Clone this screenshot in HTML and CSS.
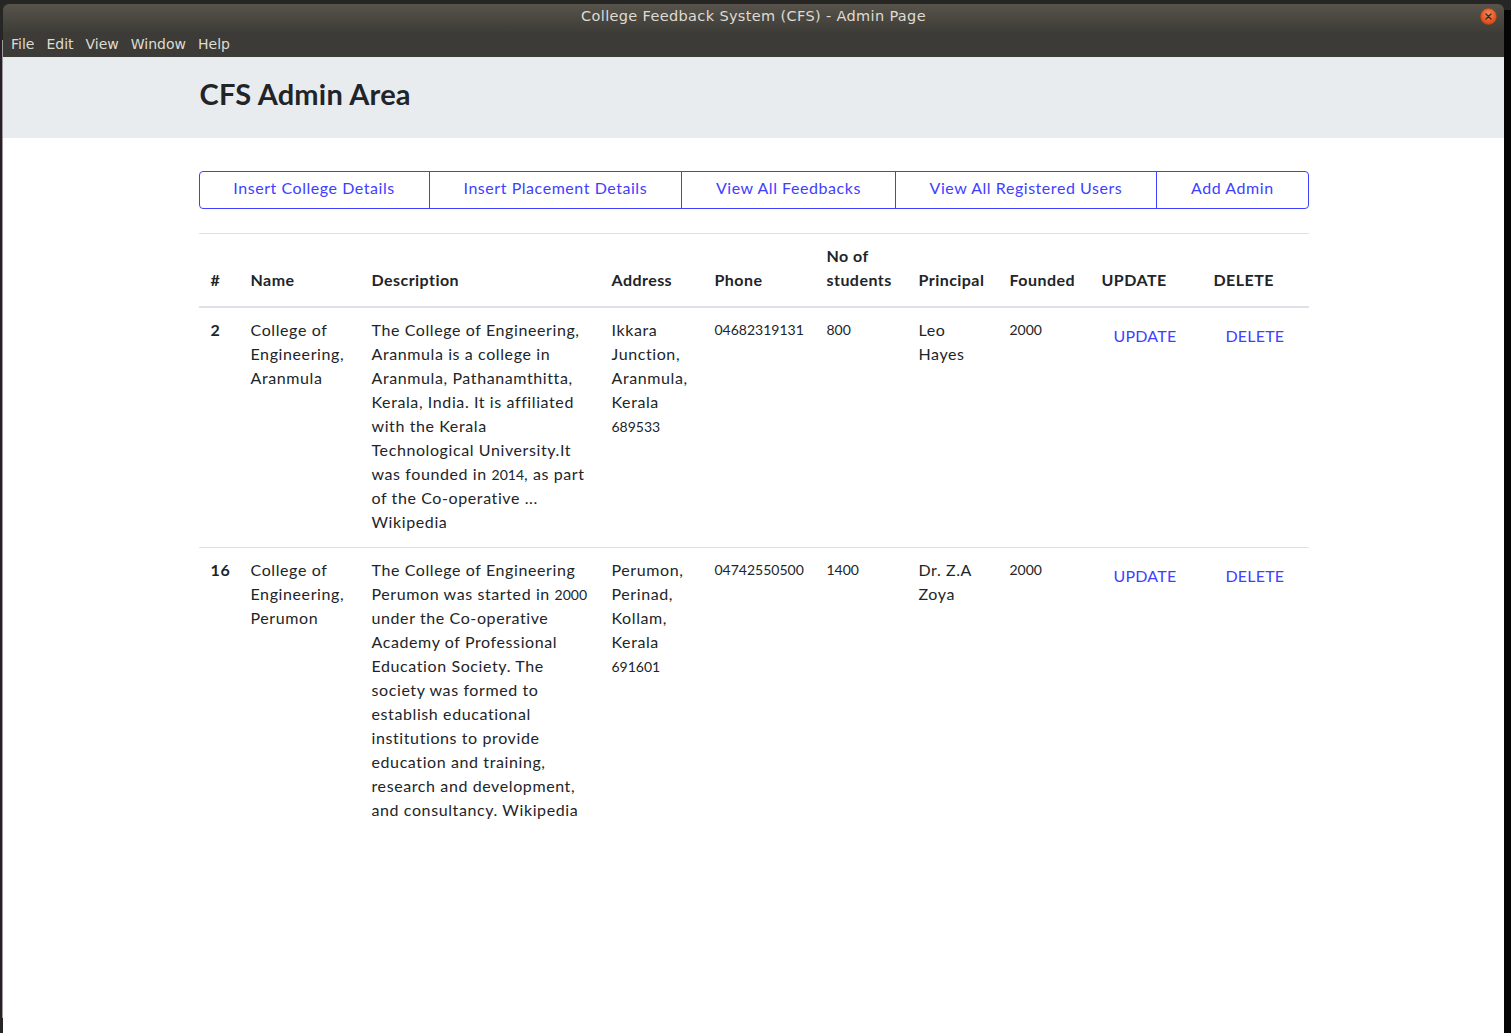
FILE: index.html
```html
<!DOCTYPE html>
<html lang="en">
<head>
<meta charset="utf-8">
<title>College Feedback System (CFS) - Admin Page</title>
<link rel="stylesheet" href="styles.css">
</head>
<body>
<div class="desktop">
  <div class="edge-left"></div>
  <div class="window">
    <div class="titlebar">
      <span class="title">College Feedback System (CFS) - Admin Page</span>
      <span class="close">
        <svg width="17" height="17" viewBox="0 0 17 17"><defs><radialGradient id="cg" cx="50%" cy="35%" r="60%"><stop offset="0" stop-color="#f58a5c"/><stop offset="1" stop-color="#dd4814"/></radialGradient></defs><circle cx="8.5" cy="8.5" r="8" fill="url(#cg)" stroke="#b8400f" stroke-width="0.6"/><path d="M6 6 L11 11 M11 6 L6 11" stroke="#3a2a22" stroke-width="1.4" stroke-linecap="round"/></svg>
      </span>
    </div>
    <div class="menubar">
      <span class="menu-item">File</span>
      <span class="menu-item">Edit</span>
      <span class="menu-item">View</span>
      <span class="menu-item">Window</span>
      <span class="menu-item">Help</span>
    </div>
    <div class="content">
      <header class="jumbotron">
        <div class="container">
          <h1 class="page-title">CFS Admin Area</h1>
        </div>
      </header>
      <main class="container">
        <nav class="btn-group">
          <a class="btn-outline">Insert College Details</a>
          <a class="btn-outline">Insert Placement Details</a>
          <a class="btn-outline">View All Feedbacks</a>
          <a class="btn-outline">View All Registered Users</a>
          <a class="btn-outline">Add Admin</a>
        </nav>
        <table class="table">
          <colgroup>
            <col class="c-id"><col class="c-name"><col class="c-desc"><col class="c-addr"><col class="c-phone"><col class="c-stud"><col class="c-prin"><col class="c-found"><col class="c-upd"><col class="c-del">
          </colgroup>
          <thead>
            <tr>
              <th>#</th>
              <th>Name</th>
              <th>Description</th>
              <th>Address</th>
              <th>Phone</th>
              <th>No of students</th>
              <th>Principal</th>
              <th>Founded</th>
              <th>UPDATE</th>
              <th>DELETE</th>
            </tr>
          </thead>
          <tbody>
            <tr>
              <th class="row-id">2</th>
              <td>College of Engineering, Aranmula</td>
              <td>The College of Engineering, Aranmula is a college in Aranmula, Pathanamthitta, Kerala, India. It is affiliated with the Kerala Technological University.It was founded in <span class="num-inline">2014</span>, as part of the Co-operative ... Wikipedia</td>
              <td>Ikkara Junction, Aranmula, Kerala <span class="num-inline">689533</span></td>
              <td class="num">04682319131</td>
              <td class="num">800</td>
              <td>Leo Hayes</td>
              <td class="num">2000</td>
              <td><a class="btn-link">UPDATE</a></td>
              <td><a class="btn-link">DELETE</a></td>
            </tr>
            <tr>
              <th class="row-id">16</th>
              <td>College of Engineering, Perumon</td>
              <td>The College of Engineering Perumon was started in <span class="num-inline">2000</span> under the Co-operative Academy of Professional Education Society. The society was formed to establish educational institutions to provide education and training, research and development, and consultancy. Wikipedia</td>
              <td>Perumon, Perinad, Kollam, Kerala <span class="num-inline">691601</span></td>
              <td class="num">04742550500</td>
              <td class="num">1400</td>
              <td>Dr. Z.A Zoya</td>
              <td class="num">2000</td>
              <td><a class="btn-link">UPDATE</a></td>
              <td><a class="btn-link">DELETE</a></td>
            </tr>
          </tbody>
        </table>
      </main>
    </div>
  </div>
  <div class="edge-right"></div>
</div>
</body>
</html>
```

FILE: styles.css
```css
* { box-sizing: border-box; }

html, body {
  margin: 0;
  padding: 0;
  height: 100%;
}

body {
  background: #262624;
  font-family: Lato, "Open Sans", sans-serif;
  color: #212529;
}

.desktop {
  display: flex;
  height: 1033px;
  overflow: hidden;
}

.edge-left {
  width: 3px;
  flex: none;
  background: #2a1f28;
  border-right: 1px solid #9b9b9b;
  margin-top: 40px;
  margin-bottom: 15px;
}

.edge-right {
  flex: 1;
  background: #050505;
  margin-top: 10px;
}

.window {
  width: 1501px;
  flex: none;
  display: flex;
  flex-direction: column;
  margin-top: 4px;
}

.titlebar {
  height: 28px;
  padding-bottom: 4px;
  background: linear-gradient(#58544c, #45433d 70%, #3e3d38);
  border-radius: 6px 6px 0 0;
  display: flex;
  align-items: center;
  justify-content: center;
  position: relative;
}

.title {
  font-family: "DejaVu Sans", sans-serif;
  font-size: 14.5px;
  color: #dfdbd2;
  letter-spacing: 0.35px;
}

.close {
  position: absolute;
  right: 7px;
  top: 4px;
  width: 17px;
  height: 17px;
  display: block;
}

.close svg { display: block; }

.menubar {
  height: 25px;
  background: #3c3b37;
  display: flex;
  align-items: center;
  gap: 12px;
  padding: 0 0 1px 8px;
}

.menu-item {
  font-family: "DejaVu Sans", sans-serif;
  font-size: 14px;
  color: #dfdbd2;
}

.content {
  flex: 1;
  background: #fff;
}

.container {
  width: 1110px;
  margin: 0 auto;
}

.jumbotron {
  background: #e9ecef;
  height: 81px;
  padding-top: 20px;
}

.page-title {
  margin: 0 0 0 1px;
  font-size: 29px;
  font-weight: 700;
  line-height: 1.2;
  letter-spacing: 0.2px;
  color: #212529;
}

.btn-group {
  display: flex;
  margin-top: 33px;
  border: 1px solid #4040ff;
  border-radius: 4px;
  height: 38px;
}

.btn-outline {
  flex: 1 1 auto;
  display: flex;
  align-items: center;
  justify-content: center;
  padding: 0 12px 5px;
  color: #4040ff;
  font-size: 16px;
  letter-spacing: 0.55px;
  white-space: nowrap;
  border-left: 1px solid #4040ff;
}

.btn-outline:first-child { border-left: none; }

.table {
  width: 1110px;
  margin-top: 24px;
  border-collapse: collapse;
  table-layout: fixed;
  font-size: 16px;
  line-height: 24px;
  letter-spacing: 0.6px;
}

.c-id { width: 40px; }
.c-name { width: 121px; }
.c-desc { width: 240px; }
.c-addr { width: 103px; }
.c-phone { width: 112px; }
.c-stud { width: 92px; }
.c-prin { width: 91px; }
.c-found { width: 92px; }
.c-upd { width: 112px; }
.c-del { width: 107px; }

.table th,
.table td {
  padding: 10px 12px 13px;
  text-align: left;
  vertical-align: top;
  border-top: 1px solid #dee2e6;
}

.table thead th {
  padding-bottom: 14px;
  vertical-align: bottom;
  border-bottom: 2px solid #dee2e6;
  font-weight: 700;
  letter-spacing: 0.45px;
}

.table tbody tr:first-child th,
.table tbody tr:first-child td {
  border-top: none;
}

.row-id { font-weight: 700; }

.num {
  font-size: 14px;
  letter-spacing: 0;
}

.num-inline {
  font-size: 14px;
  line-height: 1;
  letter-spacing: 0;
}

.btn-link {
  display: inline-block;
  padding: 6px 12px;
  color: #4040ff;
  font-size: 16px;
  line-height: 24px;
  letter-spacing: 0.2px;
}
```
